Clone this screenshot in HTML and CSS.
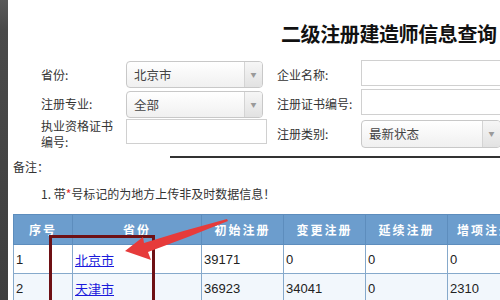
FILE: index.html
```html
<!DOCTYPE html>
<html lang="zh">
<head>
<meta charset="utf-8">
<link rel="stylesheet" href="styles.css">
</head>
<body>
<div class="page">
  <div class="strip"></div>
  <div class="main">
    <h1 class="title">二级注册建造师信息查询</h1>
    <div class="form">
      <div class="label">省份:</div>
      <div class="select s1"><span class="val">北京市</span><span class="arrow">▼</span></div>
      <div class="label">企业名称:</div>
      <div class="input r1"></div>

      <div class="label">注册专业:</div>
      <div class="select s2"><span class="val">全部</span><span class="arrow">▼</span></div>
      <div class="label">注册证书编号:</div>
      <div class="input r2"></div>

      <div class="label two">执业资格证书编号:</div>
      <div class="input l3"></div>
      <div class="label">注册类别:</div>
      <div class="select s3"><span class="val">最新状态</span><span class="arrow">▼</span></div>
    </div>
    <div class="rule"></div>
    <div class="remark">备注：</div>
    <div class="note">1. 带<span class="star">*</span>号标记的为地方上传非及时数据信息！</div>
    <div class="table-wrap">
      <table class="data">
        <thead>
          <tr><th class="c1">序号</th><th class="c2">省份</th><th class="c3">初始注册</th><th class="c4">变更注册</th><th class="c5">延续注册</th><th class="c6">增项注册</th></tr>
        </thead>
        <tbody>
          <tr><td>1</td><td><a href="#">北京市</a></td><td>39171</td><td>0</td><td>0</td><td>0</td></tr>
          <tr class="alt"><td>2</td><td><a href="#">天津市</a></td><td>36923</td><td>34041</td><td>0</td><td>2310</td></tr>
        </tbody>
      </table>
      <div class="mark-box"></div>
      <svg class="mark-arrow" width="110" height="50" viewBox="0 0 110 50">
        <path d="M0 33 L18 19 L19 25 Q60 12 102 1 L103 3 Q64 19 23 34 L26 42 Z" fill="#e63b3b"/>
      </svg>
    </div>
  </div>
</div>
</body>
</html>
```
FILE: styles.css
```css
html, body {
  margin: 0;
  padding: 0;
  background: #ffffff;
}
body {
  width: 500px;
  height: 300px;
  overflow: hidden;
  font-family: "Noto Sans CJK SC", "Noto Sans", sans-serif;
  font-size: 12px;
  color: #333333;
}
.page {
  display: flex;
  height: 300px;
}
.strip {
  flex: none;
  width: 8px;
  background: linear-gradient(#5a5a5a 0, #4a4a4a 30px, #3e3e3e 100%);
}
.main {
  flex: 1;
  min-width: 0;
  overflow: hidden;
}
.title {
  margin: 0;
  height: 60px;
  box-sizing: border-box;
  padding: 23px 0 0 273px;
  font-family: "Noto Sans CJK SC", sans-serif;
  font-size: 20px;
  line-height: 22px;
  font-weight: 700;
  color: #111111;
  white-space: nowrap;
  letter-spacing: -0.4px;
}
.form {
  display: grid;
  grid-template-columns: 85px 151px 84px 160px;
  grid-template-rows: 29px 30px 30px;
  padding-left: 33px;
}
.label {
  align-self: center;
  line-height: 16px;
  color: #333333;
  white-space: nowrap;
}
.label.two {
  white-space: normal;
  width: 74px;
}
.select {
  align-self: start;
  display: flex;
  box-sizing: border-box;
  width: 137px;
  height: 27px;
  border: 1px solid #c8c8c8;
  border-radius: 4px;
  background: linear-gradient(#ffffff, #f0f0f0);
}
.select .val {
  flex: 1;
  padding-left: 7px;
  line-height: 25px;
  font-size: 12.5px;
  color: #444444;
}
.select .arrow {
  flex: none;
  width: 17px;
  border-left: 1px solid #d4d4d4;
  background: linear-gradient(#f6f6f6, #e2e2e2);
  border-radius: 0 3px 3px 0;
  color: #9a9a9a;
  font-size: 6px;
  line-height: 25px;
  text-align: center;
}
.s1 { margin-top: 1px; }
.s2 { margin-top: 2px; }
.s3 { margin-top: 1px; width: 140px; height: 28px; }
.s3 .val, .s3 .arrow { line-height: 26px; }
.input {
  align-self: start;
  box-sizing: border-box;
  border: 1px solid #d0d0d0;
  background: #ffffff;
}
.l3 { width: 141px; height: 25px; }
.r1 { width: 150px; height: 26px; }
.r2 { width: 150px; height: 26px; }
.rule {
  margin: 7px 0 0 162px;
  height: 2px;
  background: #333333;
}
.remark {
  margin-top: 1px;
  padding-left: 5px;
  line-height: 16px;
  font-size: 12px;
  color: #333333;
}
.note {
  margin-top: 11px;
  padding-left: 33px;
  line-height: 16px;
  font-size: 12px;
  color: #333333;
  white-space: nowrap;
}
.star { color: #e03030; }
.table-wrap {
  position: relative;
  margin: 12px 0 0 5px;
}
.data {
  border-collapse: collapse;
  table-layout: fixed;
  width: 510px;
}
.data th {
  height: 29px;
  padding: 0;
  background: #6c9dcd;
  color: #ffffff;
  font-weight: bold;
  font-size: 12px;
  letter-spacing: 2px;
  text-align: center;
  border: 1px solid #5d8dbd;
  border-left-color: #9cc0e2;
}
.data th:first-child { border-left-color: #5d8dbd; }
.c1 { width: 58px; }
.c2 { width: 128px; }
.c3, .c4, .c5 { width: 81px; }
.data td {
  height: 28px;
  padding: 0 0 0 2px;
  border: 1px solid #86a9cb;
  font-family: "Liberation Sans", "Noto Sans CJK SC", sans-serif;
  font-size: 13px;
  color: #222222;
  text-align: left;
}
.data tr.alt td { background: #f2f7fc; }
.data a {
  color: #1a1adb;
  text-decoration: underline;
  font-family: "Noto Sans CJK SC", sans-serif;
  font-size: 13px;
}
.mark-box {
  position: absolute;
  left: 36px;
  top: 21px;
  width: 106px;
  height: 80px;
  box-sizing: border-box;
  border: 3px solid #6e1014;
}
.mark-arrow {
  position: absolute;
  left: 112px;
  top: 4px;
}
```
